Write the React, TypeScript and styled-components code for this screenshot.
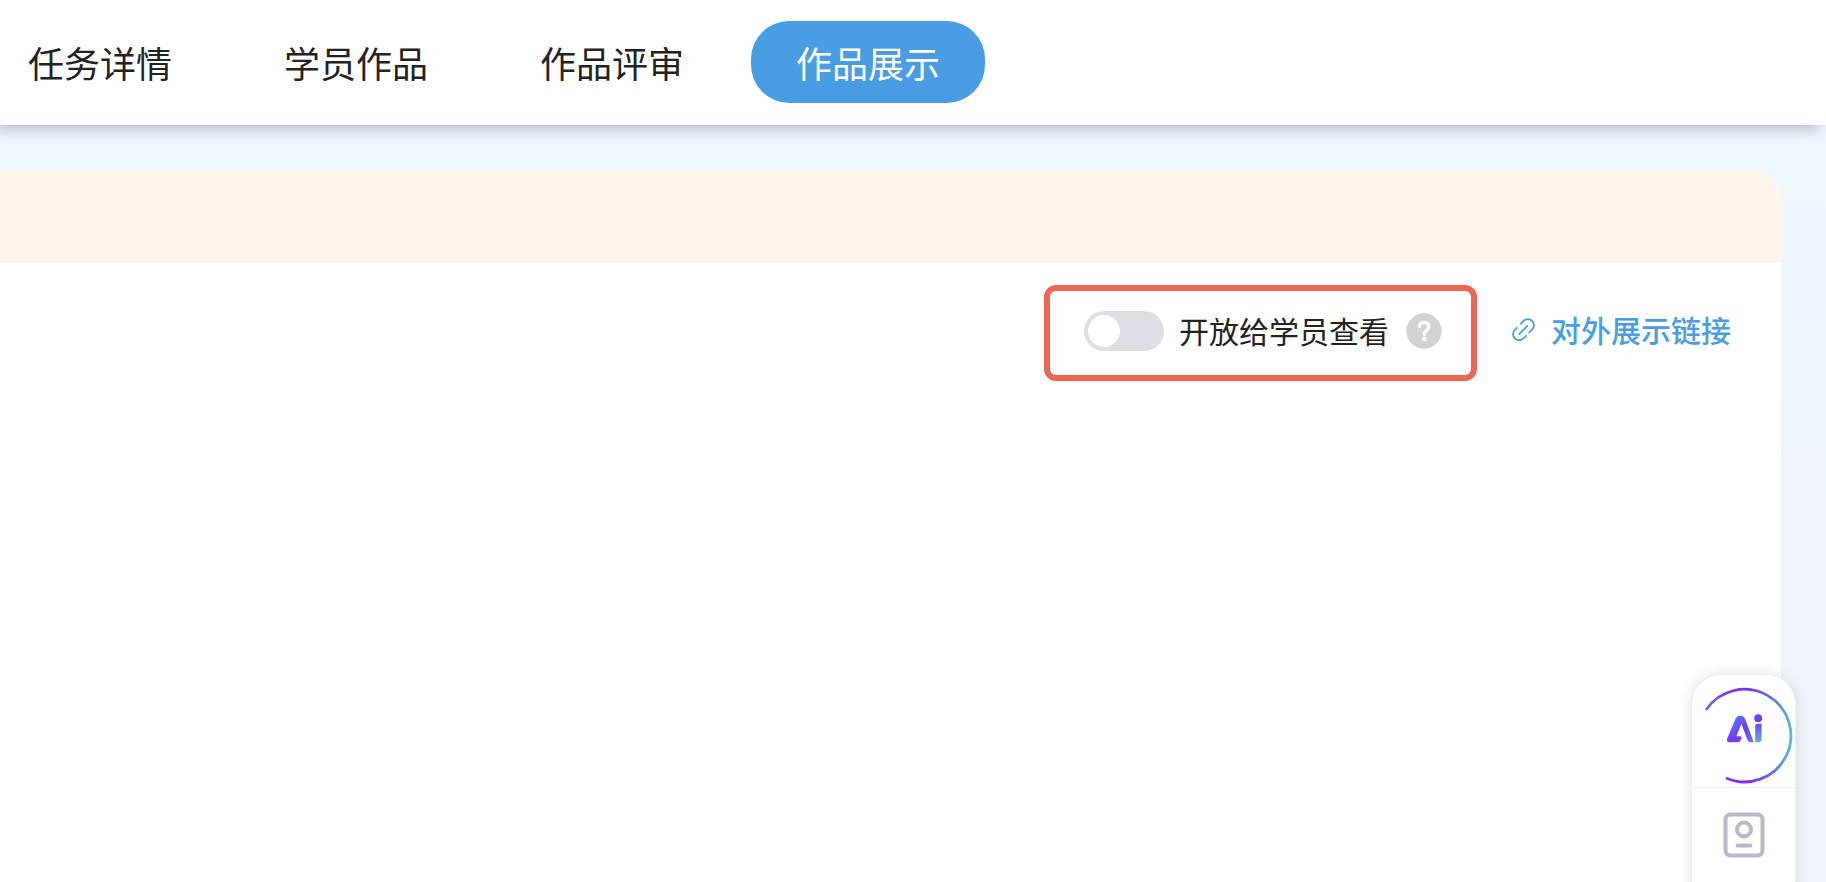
import React, { useState } from 'react';
import styled, { createGlobalStyle } from 'styled-components';

const GlobalStyle = createGlobalStyle`
  *, *::before, *::after { box-sizing: border-box; }
  html, body, #root { height: 100%; }
  body {
    margin: 0;
    overflow: hidden;
    color: #222;
    font-family: "Noto Sans CJK SC", "Noto Sans", sans-serif;
  }
`;

const Page = styled.div`
  display: flex;
  flex-direction: column;
  min-height: 100%;
  background: linear-gradient(#eff7ff 20%, #eff5fa 60%);
`;

const Header = styled.header`
  position: relative;
  padding: 21px 0 22px;
  background: #fff;
  box-shadow: -6px 4px 14px rgba(0, 0, 0, 0.25);
`;

const TabList = styled.nav`
  display: flex;
  gap: 22px;
  margin-left: -17px;
`;

const Tab = styled.button<{ $active: boolean }>`
  flex: none;
  height: 82px;
  padding: 0 45px;
  border: 0;
  border-radius: 38px;
  background: ${({ $active }) => ($active ? '#489de3' : 'transparent')};
  color: ${({ $active }) => ($active ? '#fff' : '#222')};
  font: inherit;
  font-size: 36px;
  line-height: 82px;
  white-space: nowrap;
  cursor: pointer;
`;

const Card = styled.main`
  flex: 1;
  margin: 45px 45px 0 0;
  border-top-right-radius: 30px;
  background: #fff;
  overflow: hidden;
`;

const Banner = styled.div`
  height: 93px;
  background: #fef6ea;
`;

const Toolbar = styled.div`
  display: flex;
  justify-content: flex-end;
  align-items: flex-start;
  gap: 35px;
  padding: 22px 50px 0 0;
`;

const VisibilityBox = styled.div`
  display: flex;
  align-items: center;
  height: 96px;
  padding: 0 29px 4px 34px;
  border: 6px solid #ec6656;
  border-radius: 12px;
`;

const VisibilityLabel = styled.label`
  display: flex;
  align-items: center;
  gap: 15px;
  cursor: pointer;
`;

const ActionText = styled.span`
  padding-bottom: 3px;
  font-size: 30px;
  line-height: 44px;
`;

const Switch = styled.input`
  appearance: none;
  display: flex;
  align-items: center;
  width: 80px;
  height: 40px;
  margin: 0;
  padding: 4px;
  border-radius: 20px;
  background: #dcdfe6;
  cursor: pointer;

  &::before {
    content: "";
    width: 32px;
    height: 32px;
    border-radius: 50%;
    background: #fff;
  }
  &:checked { justify-content: flex-end; background: #489de3; }
`;

const HelpButton = styled.button`
  display: flex;
  margin-left: 17px;
  padding: 0;
  border: 0;
  background: none;
  cursor: pointer;
`;

const ShareLink = styled.a`
  display: flex;
  align-items: center;
  gap: 15px;
  height: 90px;
  color: #489de3;
  font-weight: 500;
  text-decoration: none;
`;

const Dock = styled.aside`
  position: fixed;
  top: 674px;
  right: 30px;
  bottom: -30px;
  width: 105px;
  border: 1px solid #eeeef2;
  border-radius: 30px;
  background: #fff;
  box-shadow: 0 0 14px rgba(0, 0, 0, 0.12);
`;

const DockButton = styled.button<{ $height: number }>`
  display: flex;
  justify-content: center;
  align-items: center;
  width: 100%;
  height: ${({ $height }) => $height}px;
  padding: 0;
  border: 0;
  border-bottom: 1px solid #ededf3;
  background: none;
  cursor: pointer;

  &:last-child { border-bottom: 0; }
`;

const HelpIcon = () => (
  <svg width="36" height="36" viewBox="0 0 36 36" fill="none" aria-hidden="true">
    <circle cx="18" cy="18" r="17.7" fill="#d3d3d3" />
    <path d="M13.3 13.6C13.7 11 15.5 9.4 18.1 9.4c2.9 0 4.8 1.7 4.8 4.2 0 1.9-1 2.9-2.5 4.1-1.5 1.2-2 2-2 3.6" stroke="#fff" strokeWidth="3.4" strokeLinecap="round" />
    <circle cx="18.3" cy="26" r="2.3" fill="#fff" />
  </svg>
);

const LinkIcon = () => (
  <svg width="24" height="24" viewBox="0 0 24 24" fill="none" stroke="#489de3" strokeWidth="1.8" strokeLinecap="round" aria-hidden="true">
    <path d="M8.8 5.8L11.6 3a5.9 5.9 0 0 1 8.6 0a5.9 5.9 0 0 1 0 8.4L17.2 14.4M4.8 10L2.8 12a5.9 5.9 0 0 0 0 8.4a5.9 5.9 0 0 0 8.6 0L14.2 17.8M7.4 16l7.8-8" />
  </svg>
);

const AiIcon = () => (
  <svg width="103" height="112" viewBox="0 0 103 112" fill="none" aria-hidden="true">
    <defs>
      <linearGradient id="ring" x1="14" y1="0" x2="99" y2="0" gradientUnits="userSpaceOnUse">
        <stop offset="0" stopColor="#5a70f5" />
        <stop offset="0.3" stopColor="#7d2bf0" />
        <stop offset="0.5" stopColor="#7d2bf0" />
        <stop offset="0.85" stopColor="#5688dc" />
        <stop offset="1" stopColor="#56bdd0" />
      </linearGradient>
      <linearGradient id="letterA" x1="38" y1="45" x2="60" y2="67" gradientUnits="userSpaceOnUse">
        <stop offset="0" stopColor="#5a7ef5" />
        <stop offset="0.5" stopColor="#7238f2" />
        <stop offset="1" stopColor="#6670f2" />
      </linearGradient>
      <linearGradient id="letterI" x1="64" y1="48" x2="68" y2="67" gradientUnits="userSpaceOnUse">
        <stop offset="0" stopColor="#6e45f0" />
        <stop offset="1" stopColor="#56b0dc" />
      </linearGradient>
    </defs>
    <path d="M14 35A46.3 46.3 0 1 1 34 103" stroke="url(#ring)" strokeWidth="2.8" />
    <path
      d="M35.3 63.2L43.6 43.4Q44.8 40.8 47.6 40.8H49Q51.8 40.8 52.9 43.4L61.8 67.2H58.4Q56.4 67.2 55.6 65.2L49.3 48.8L44.4 61.2H48.4Q50.2 61.2 49.4 63.4L48.8 65Q48 67.2 45.8 67.2H37.6Q33.8 67.2 35.3 63.2Z"
      fill="url(#letterA)"
    />
    <circle cx="66.2" cy="43.2" r="3.9" fill="#7238f2" />
    <path d="M63.2 51.2Q63.2 48.8 65.6 48.8H69.6V64.8Q69.6 67.2 67.2 67.2H63.2Z" fill="url(#letterI)" />
  </svg>
);

const ProfileIcon = () => (
  <svg width="42" height="46" viewBox="0 0 42 46" fill="none" stroke="#b8bbc7" strokeWidth="4" aria-hidden="true">
    <rect x="2.5" y="2.5" width="37" height="41" rx="5" />
    <circle cx="21" cy="17.5" r="7" />
    <path d="M14.5 33.5h13" strokeLinecap="round" />
  </svg>
);

const tabs = ['任务详情', '学员作品', '作品评审', '作品展示'];

export default function App() {
  const [activeTab, setActiveTab] = useState('作品展示');
  const [open, setOpen] = useState(false);

  return (
    <>
      <GlobalStyle />
      <Page>
        <Header>
          <TabList>
            {tabs.map((tab) => (
              <Tab key={tab} type="button" $active={tab === activeTab} onClick={() => setActiveTab(tab)}>
                {tab}
              </Tab>
            ))}
          </TabList>
        </Header>
        <Card>
          <Banner />
          <Toolbar>
            <VisibilityBox>
              <VisibilityLabel>
                <Switch type="checkbox" role="switch" checked={open} onChange={(e) => setOpen(e.target.checked)} />
                <ActionText>开放给学员查看</ActionText>
              </VisibilityLabel>
              <HelpButton type="button" aria-label="帮助">
                <HelpIcon />
              </HelpButton>
            </VisibilityBox>
            <ShareLink href="#share">
              <LinkIcon />
              <ActionText>对外展示链接</ActionText>
            </ShareLink>
          </Toolbar>
        </Card>
        <Dock>
          <DockButton type="button" aria-label="AI" $height={113}>
            <AiIcon />
          </DockButton>
          <DockButton type="button" aria-label="个人资料" $height={94}>
            <ProfileIcon />
          </DockButton>
        </Dock>
      </Page>
    </>
  );
}
